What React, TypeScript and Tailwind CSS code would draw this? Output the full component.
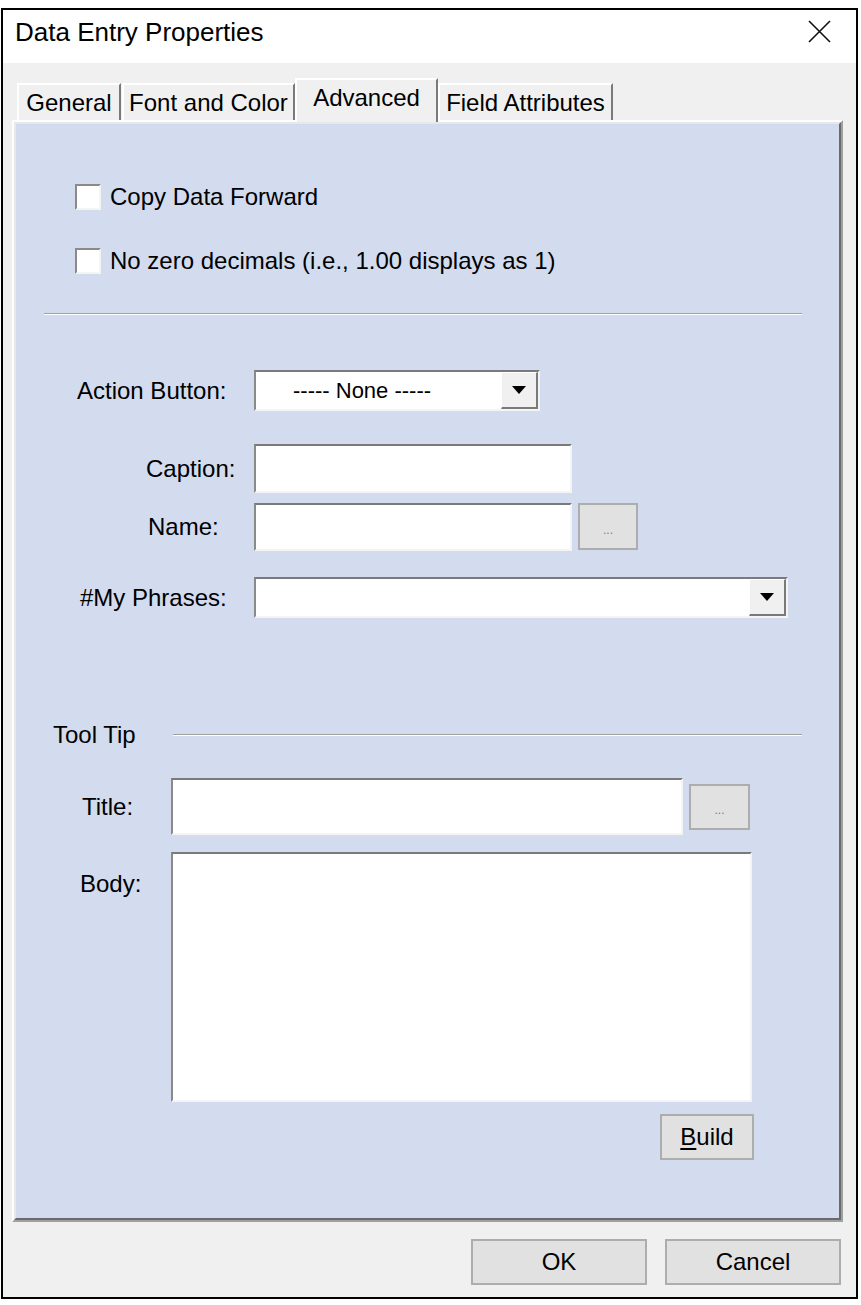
import React from "react"

const font = { fontFamily: '"Liberation Sans", Arial, sans-serif' }

function Checkbox({ label, className = "" }: { label: string; className?: string }) {
  return (
    <div className={`flex items-center ${className}`}>
      <div className="h-[26px] w-[26px] border-2 border-t-[#8a8a8a] border-l-[#8a8a8a] border-b-[#f4f4f4] border-r-[#f4f4f4] bg-white" />
      <span className="ml-[9px] text-[24px] leading-[28px] text-black">{label}</span>
    </div>
  )
}

function Sunken({ className = "", children }: { className?: string; children?: React.ReactNode }) {
  return (
    <div
      className={`border-2 border-t-[#7a7a7a] border-l-[#8a8a8a] border-b-[#f4f4f4] border-r-[#f4f4f4] bg-white ${className}`}
    >
      {children}
    </div>
  )
}

function Arrow() {
  return (
    <div className="flex h-full w-[37px] items-center justify-center border-t border-l border-t-white border-l-white border-b-2 border-r-2 border-b-[#7a7a7a] border-r-[#7a7a7a] bg-[#f0f0f0]">
      <svg width="14" height="8" viewBox="0 0 14 8">
        <path d="M0 0 H14 L7 8 Z" fill="#000" />
      </svg>
    </div>
  )
}

function DotsButton({ className = "" }: { className?: string }) {
  return (
    <div
      className={`flex items-end justify-center border-2 border-[#adadad] bg-[#e1e1e1] pb-[12px] text-[12px] leading-[12px] text-[#7a7a7a] ${className}`}
    >
      ...
    </div>
  )
}

function PushButton({ className = "", children }: { className?: string; children: React.ReactNode }) {
  return (
    <div
      className={`flex items-center justify-center border-2 border-[#adadad] bg-[#e1e1e1] text-[24px] text-black ${className}`}
    >
      {children}
    </div>
  )
}

function Tab({ label, selected = false, w }: { label: string; selected?: boolean; w: string }) {
  if (selected) {
    return (
      <div
        className={`relative z-10 flex h-[44px] items-center justify-center border-t-2 border-l-2 border-t-white border-l-white border-r-2 border-r-[#7a7a7a] bg-[#f0f0f0] pb-[6px] text-[24px] text-black ${w}`}
      >
        {label}
      </div>
    )
  }
  return (
    <div
      className={`mb-[2px] flex h-[37px] items-center justify-center border-t-2 border-l-2 border-t-white border-l-white border-r-2 border-r-[#7a7a7a] bg-[#f0f0f0] text-[24px] text-black ${w}`}
    >
      {label}
    </div>
  )
}

export default function App() {
  return (
    <div className="h-[1305px] w-[861px] overflow-hidden bg-white" style={font}>
      <div className="ml-[1px] mt-[8px] flex h-[1291px] w-[857px] flex-col border-2 border-black">
        {/* title bar */}
        <div className="flex h-[53px] items-center justify-between bg-white pb-[10px] pl-[12px] pr-[25px]">
          <span className="text-[26px] leading-[30px] text-black">Data Entry Properties</span>
          <svg width="23" height="23" viewBox="0 0 23 23">
            <path d="M1 1 L22 22 M22 1 L1 22" stroke="#111" strokeWidth="1.6" />
          </svg>
        </div>

        <div className="flex flex-1 flex-col bg-[#f0f0f0]">
          {/* tabs */}
          <div className="relative z-10 -mb-[2px] mt-[15px] flex items-end pl-[14px]">
            <Tab label="General" w="w-[104px]" />
            <div className="w-[1px]" />
            <Tab label="Font and Color" w="w-[173px]" />
            <Tab label="Advanced" selected w="w-[143px]" />
            <Tab label="Field Attributes" w="w-[175px]" />
          </div>

          {/* panel */}
          <div className="ml-[9px] h-[1102px] w-[831px] border-2 border-t-[#fdfdfd] border-l-[#fdfdfd] border-b-[#a0a0a0] border-r-[#a0a0a0]">
            <div className="flex h-full flex-col border-2 border-t-[#e8e8e8] border-l-[#e8e8e8] border-b-[#6a6a6a] border-r-[#6a6a6a] bg-[#d3dbee]">
              <Checkbox label="Copy Data Forward" className="ml-[59px] mt-[59px]" />
              <Checkbox label="No zero decimals (i.e., 1.00 displays as 1)" className="ml-[59px] mt-[36px]" />

              <div className="ml-[28px] mr-[37px] mt-[38px] border-t border-b border-t-[#a0a0a0] border-b-white" />

              {/* action button */}
              <div className="mt-[55px] flex items-center">
                <div className="w-[238px] pl-[61px] text-[24px] text-black">Action Button:</div>
                <Sunken className="flex h-[41px] w-[286px]">
                  <div className="flex flex-1 items-center pl-[37px] text-[22px] text-black">----- None -----</div>
                  <Arrow />
                </Sunken>
              </div>

              {/* caption */}
              <div className="mt-[33px] flex items-center">
                <div className="w-[238px] pl-[130px] text-[24px] text-black">Caption:</div>
                <Sunken className="h-[49px] w-[318px]" />
              </div>

              {/* name */}
              <div className="mt-[10px] flex items-center">
                <div className="w-[238px] pl-[132px] text-[24px] text-black">Name:</div>
                <Sunken className="h-[48px] w-[318px]" />
                <DotsButton className="ml-[6px] h-[47px] w-[60px] self-start" />
              </div>

              {/* my phrases */}
              <div className="mt-[26px] flex items-center">
                <div className="w-[238px] pl-[64px] text-[24px] text-black">#My Phrases:</div>
                <Sunken className="flex h-[41px] w-[534px]">
                  <div className="flex-1" />
                  <Arrow />
                </Sunken>
              </div>

              {/* tool tip group */}
              <div className="mr-[37px] mt-[105px] flex items-center">
                <div className="pl-[37px] text-[24px] leading-[24px] text-black">Tool Tip</div>
                <div className="ml-[37px] flex-1 border-t border-b border-t-[#a0a0a0] border-b-white" />
              </div>

              <div className="mt-[31px] flex items-center">
                <div className="w-[155px] pl-[66px] text-[24px] text-black">Title:</div>
                <Sunken className="h-[57px] w-[512px]" />
                <DotsButton className="ml-[6px] h-[46px] w-[61px]" />
              </div>

              <div className="mt-[17px] flex items-start">
                <div className="w-[155px] pl-[64px] pt-[14px] text-[24px] text-black">Body:</div>
                <Sunken className="h-[250px] w-[581px]" />
              </div>

              <div className="ml-[644px] mt-[12px]">
                <PushButton className="h-[46px] w-[94px]">
                  <span>
                    <span className="underline underline-offset-[3px]">B</span>uild
                  </span>
                </PushButton>
              </div>
            </div>
          </div>

          {/* dialog buttons */}
          <div className="mt-[17px] flex justify-end gap-[18px] pr-[15px]">
            <PushButton className="h-[46px] w-[176px]">OK</PushButton>
            <PushButton className="h-[46px] w-[176px]">Cancel</PushButton>
          </div>
        </div>
      </div>
    </div>
  )
}
